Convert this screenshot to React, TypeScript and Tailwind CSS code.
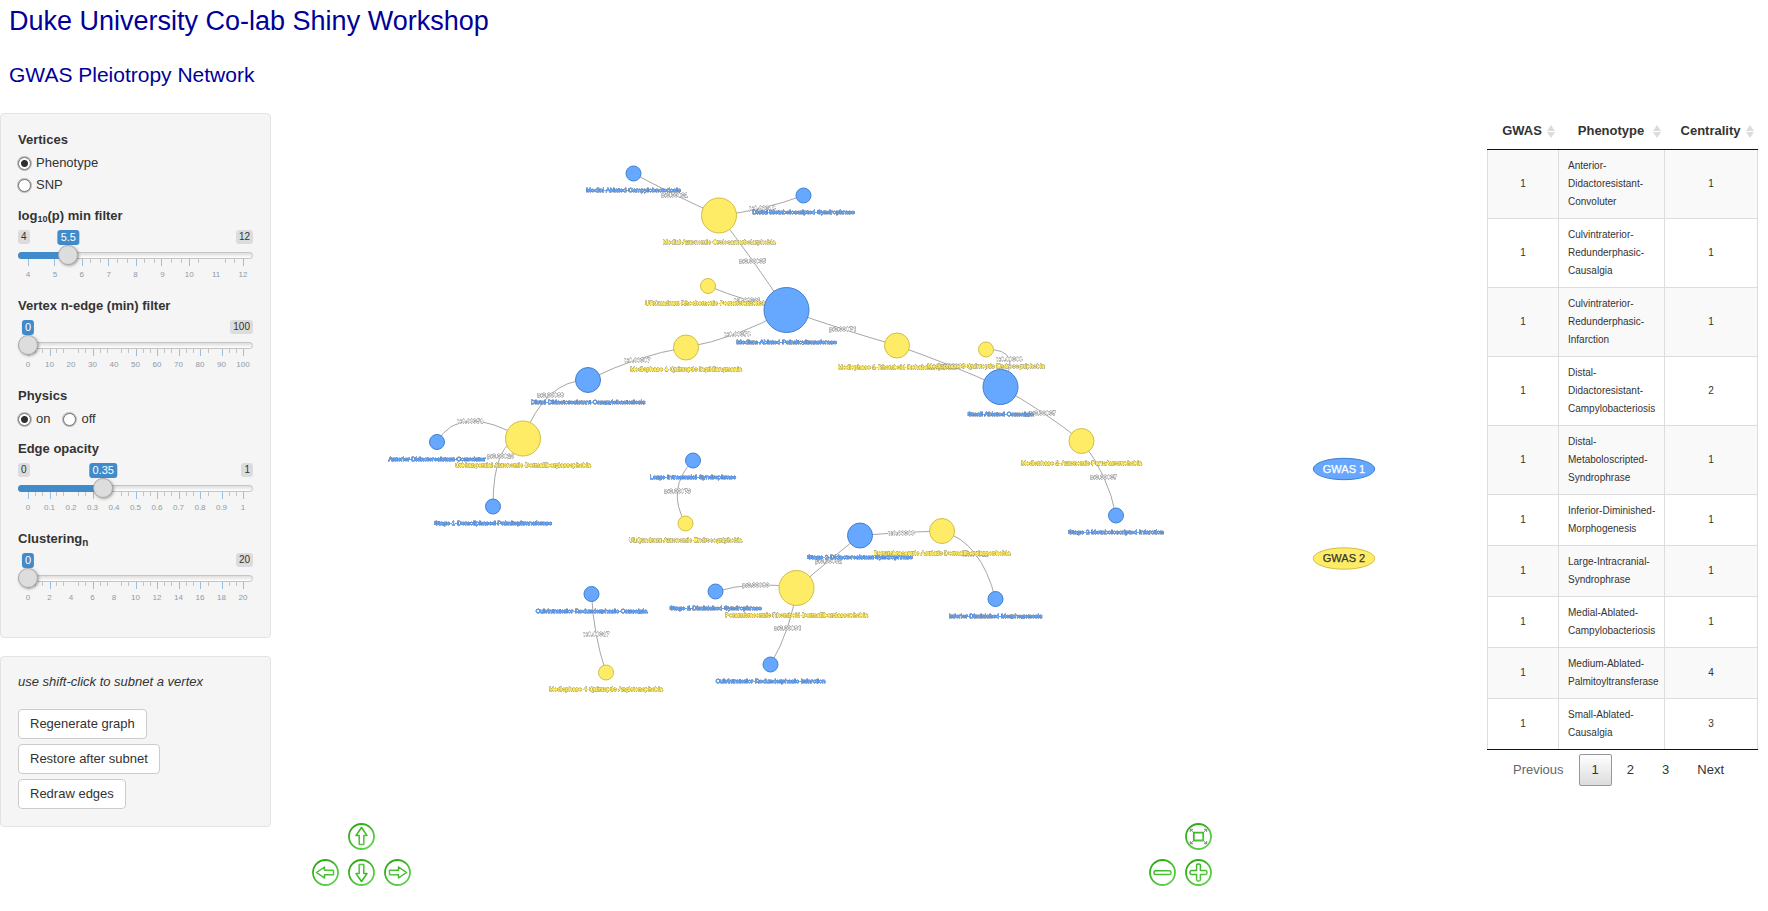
import { useState } from "react";
import type { ReactNode } from "react";

type SliderProps = {
  id: string;
  label: ReactNode;
  min: number;
  max: number;
  step: number;
  initial: number;
  labels: string[];
  majors: number[];
  minors: number[];
};

/* Tick positions, in percent of the usable track. */
const EIGHT_MAJORS = [0, 12, 25, 37, 50, 62, 75, 100];
const EIGHT_MINORS = [29, 33.3, 41.5, 46, 54, 58.5, 66.5, 71, 79.3, 91.5, 95.8];
const TEN_MAJORS = [0, 10, 30, 50, 60, 70, 80, 90, 100];
const TEN_MINORS = [
  3.3, 6.6, 13, 16.5, 23.3, 26.6, 33.3, 36.6, 43.3, 46.6, 53.3, 56.6, 63.3, 66.6, 73.3, 76.6, 83.5, 93.3, 96.6,
];

function Slider({ id, label, min, max, step, initial, labels, majors, minors }: SliderProps) {
  const [value, setValue] = useState(initial);
  const ratio = (value - min) / (max - min);
  const center = `calc(10px + (100% - 20px) * ${ratio})`;
  return (
    <div className="h-[90px]">
      <label htmlFor={id} className="block h-5 font-bold leading-5">
        {label}
      </label>
      <div className="relative mt-1 flex h-4 items-start justify-between text-[10px] leading-[14px]">
        <span className={`rounded-[3px] bg-[#dcdcdc] px-[3px] ${value === min ? "invisible" : ""}`}>{min}</span>
        <span className="rounded-[3px] bg-[#dcdcdc] px-[3px]">{max}</span>
        <output
          htmlFor={id}
          className="absolute top-0 -translate-x-1/2 rounded-[3px] bg-[#428bca] px-[3px] text-[11px] leading-[15px] text-white"
          style={{ left: center }}
        >
          {value}
        </output>
      </div>
      <div className="relative -mt-px flex h-5 items-center">
        <div className="h-[7px] w-full rounded-[4px] border border-[#c4c4c4] bg-gradient-to-b from-[#dedede] to-white" />
        <div className="absolute left-0 h-[7px] rounded-l-[4px] bg-[#428bca]" style={{ width: ratio > 0 ? center : 0 }} />
        <input
          id={id}
          type="range"
          min={min}
          max={max}
          step={step}
          value={value}
          onChange={(e) => setValue(Number(e.target.value))}
          className="absolute inset-0 z-10 h-5 w-full cursor-pointer appearance-none bg-transparent [&::-webkit-slider-thumb]:h-5 [&::-webkit-slider-thumb]:w-5 [&::-webkit-slider-thumb]:appearance-none [&::-webkit-slider-thumb]:rounded-full [&::-webkit-slider-thumb]:border [&::-webkit-slider-thumb]:border-[#aaa] [&::-webkit-slider-thumb]:bg-[#dddddd] [&::-webkit-slider-thumb]:shadow-[1px_1px_3px_rgba(0,0,0,0.35)]"
        />
      </div>
      <div className="-mt-[6px] px-[10px]">
        <svg className="block h-[7px] w-full overflow-visible" shapeRendering="crispEdges" aria-hidden="true">
          {majors.map((p) => (
            <rect key={p} x={`${p}%`} y="0" width="1" height="7" fill="#99bfe0" />
          ))}
          {minors.map((p) => (
            <rect key={p} x={`${p}%`} y="0" width="1" height="4" fill="#c4c4c4" />
          ))}
        </svg>
        <div className="mt-[3px] flex justify-between text-[8px] leading-[11px] text-[#8f9ba6]">
          {labels.map((t) => (
            <span key={t} className="flex w-0 justify-center">
              {t}
            </span>
          ))}
        </div>
      </div>
    </div>
  );
}

function Radio({ name, text, checked }: { name: string; text: string; checked?: boolean }) {
  return (
    <label className="flex h-[22px] items-center gap-[5px]">
      <input
        type="radio"
        name={name}
        defaultChecked={checked}
        className="mt-px h-[13px] w-[13px] appearance-none rounded-full border border-[#777] bg-white shadow-[0_0_0_1px_#bbb] checked:bg-[radial-gradient(circle,#2f2f2f_0_3px,#fff_4px)]"
      />
      {text}
    </label>
  );
}

type Group = 1 | 2;
type VertexData = { x: number; y: number; r: number; g: Group; name: string };

const VERTICES: Record<string, VertexData> = {
  A: { x: 633.5, y: 173.5, r: 7.5, g: 1, name: "Medial-Ablated-Campylobacteriosis" },
  B: { x: 803.5, y: 195.5, r: 7.5, g: 1, name: "Distal-Metaboloscripted-Syndrophrase" },
  C: { x: 719, y: 215.5, r: 17.5, g: 2, name: "Medial-Autonomic-Orolocanterbolarphobia" },
  D: { x: 708, y: 286, r: 7.5, g: 2, name: "URQuadrant-Rhochemonic-Posteriolexophobia" },
  E: { x: 786.5, y: 310, r: 22.5, g: 1, name: "Medium-Ablated-Palmitoyltransferase" },
  F: { x: 686, y: 347.5, r: 12.5, g: 2, name: "Mediophase-1-Quintoptic-Ingridiangmania" },
  G: { x: 588, y: 380, r: 12.5, g: 1, name: "Distal-Didactoresistant-Campylobacteriosis" },
  H: { x: 523, y: 438.5, r: 17.5, g: 2, name: "Orbitangential-Autonomic-Dermalliberglassophobia" },
  I: { x: 437, y: 442, r: 7.5, g: 1, name: "Anterior-Didactoresistant-Convoluter" },
  J: { x: 493, y: 506.5, r: 7.5, g: 1, name: "Stage-1-Demoliphased-Palmitoyltransferase" },
  K: { x: 693, y: 460.5, r: 7.5, g: 1, name: "Large-Intracranial-Syndrophrase" },
  L: { x: 685.5, y: 523.5, r: 7.5, g: 2, name: "ULQuadrant-Autonomic-Endrocogniphobia" },
  M: { x: 591.5, y: 594, r: 7.5, g: 1, name: "Culvintraterior-Redunderphasic-Causalgia" },
  N: { x: 606, y: 672.5, r: 7.5, g: 2, name: "Mediophase-4-Quintoptic-Angistonophobia" },
  O: { x: 715.5, y: 591.5, r: 7.5, g: 1, name: "Stage-1-Diminished-Syndrophrase" },
  P: { x: 796.5, y: 588, r: 17.5, g: 2, name: "Penumbracentric-Rhomboid-Dermalliberglassophobia" },
  Q: { x: 860, y: 535.5, r: 12.5, g: 1, name: "Stage-3-Didactoresistant-Syndrophrase" },
  R: { x: 942, y: 531, r: 12.5, g: 2, name: "Penumbracentric-Astriatic-Dermalliberglassophobia" },
  S: { x: 995.5, y: 599, r: 7.5, g: 1, name: "Inferior-Diminished-Morphogenesis" },
  T: { x: 770.5, y: 664.5, r: 7.5, g: 1, name: "Culvintraterior-Redunderphasic-Infarction" },
  U: { x: 897, y: 345.5, r: 12.5, g: 2, name: "Mediophase-1-Rhomboid-Rehabauriophobia" },
  V: { x: 986, y: 349.5, r: 7.5, g: 2, name: "Mediophase-6-Quintoptic-Endrocogniphobia" },
  W: { x: 1000.5, y: 387, r: 17.5, g: 1, name: "Small-Ablated-Causalgia" },
  X: { x: 1081.5, y: 441, r: 12.5, g: 2, name: "Mediophase-2-Autonomic-PartoAuroraphobia" },
  Y: { x: 1116, y: 515.5, r: 7.5, g: 1, name: "Stage-2-Metaboloscripted-Infarction" },
};

/* from, to, the point the curve runs through (where its label sits), p value */
const EDGES: [string, string, number, number, string][] = [
  ["A", "C", 674.5, 194.5, "p:0.00001"],
  ["C", "B", 762, 208, "p:0.00018"],
  ["C", "E", 752.5, 260.5, "p:0.00005"],
  ["D", "E", 747, 300, "p:0.00021"],
  ["F", "E", 737, 333.5, "p:0.00078"],
  ["G", "F", 637, 359.5, "p:0.00007"],
  ["H", "G", 550.5, 394.5, "p:0.00068"],
  ["I", "H", 470, 421, "p:0.00053"],
  ["J", "H", 500.5, 456, "p:0.00010"],
  ["K", "L", 677.5, 490.5, "p:0.00073"],
  ["M", "N", 596, 633.5, "p:0.00037"],
  ["O", "P", 755.5, 585, "p:0.00080"],
  ["P", "T", 787.5, 627.5, "p:0.00064"],
  ["P", "Q", 828.5, 561, "p:0.00052"],
  ["Q", "R", 901, 532.5, "p:0.00006"],
  ["R", "S", 975, 553.5, "p:0.00012"],
  ["E", "U", 842.5, 329, "p:0.00074"],
  ["U", "W", 951.5, 366, "p:0.00066"],
  ["V", "W", 1009, 358.5, "p:0.00008"],
  ["W", "X", 1042.5, 412.5, "p:0.00007"],
  ["X", "Y", 1103.5, 476.5, "p:0.00007"],
];

const FILL = { 1: "#66a8ff", 2: "#ffec66" };
const STROKE = { 1: "#3f7fd0", 2: "#cfbf45" };

function Network() {
  return (
    <svg
      viewBox="271 113 956 798"
      className="block w-full"
      role="img"
      aria-label="Pleiotropy network"
      fontFamily="'Liberation Sans', Arial, sans-serif"
      fontSize="6"
      textAnchor="middle"
    >
      {EDGES.map(([a, b, lx, ly]) => {
        const p = VERTICES[a];
        const q = VERTICES[b];
        const cx = 2 * lx - (p.x + q.x) / 2;
        const cy = 2 * ly - (p.y + q.y) / 2;
        return (
          <path key={a + b} d={`M${p.x} ${p.y}Q${cx} ${cy} ${q.x} ${q.y}`} fill="none" stroke="#a6a6a6" strokeWidth="1" />
        );
      })}
      {EDGES.map(([a, b, lx, ly, text]) => (
        <text
          key={a + b}
          x={lx}
          y={ly + 2}
          fill="#ffffff"
          stroke="#ffffff"
          strokeWidth="0.3"
          className="[filter:drop-shadow(0_0_0.5px_#444)_drop-shadow(0_0_0.3px_#666)]"
        >
          {text}
        </text>
      ))}
      {Object.entries(VERTICES).map(([key, v]) => (
        <g key={key}>
          <circle cx={v.x} cy={v.y} r={v.r} fill={FILL[v.g]} stroke={STROKE[v.g]} strokeWidth="1" />
          <text
            x={v.x}
            y={v.y + v.r + 11}
            fill={FILL[v.g]}
            stroke={FILL[v.g]}
            strokeWidth="0.5"
            className="[filter:drop-shadow(0_0_0.5px_#444)_drop-shadow(0_0_0.3px_#888)]"
          >
            {v.name}
          </text>
        </g>
      ))}
    </svg>
  );
}

const ARROW = "M13.5 4.5 L19 12.5 H15.8 V21.5 H11.2 V12.5 H8 Z";

function NavButton({ label, place, children }: { label: string; place: string; children: ReactNode }) {
  return (
    <button type="button" aria-label={label} className={`h-[27px] w-[27px] ${place}`}>
      <svg viewBox="0 0 27 27" className="block h-full w-full" fill="none" stroke="url(#nav-green)" strokeLinejoin="round">
        <circle cx="13.5" cy="13.5" r="12.5" fill="#ffffff" strokeWidth="1.8" />
        {children}
      </svg>
    </button>
  );
}

function NavDefs() {
  return (
    <svg className="absolute h-0 w-0" aria-hidden="true">
      <defs>
        <linearGradient id="nav-green" gradientUnits="userSpaceOnUse" x1="4" y1="2" x2="22" y2="26">
          <stop offset="0" stopColor="#27a80c" />
          <stop offset="1" stopColor="#66d455" />
        </linearGradient>
      </defs>
    </svg>
  );
}

const ROWS: [string[], number][] = [
  [["Anterior-", "Didactoresistant-", "Convoluter"], 1],
  [["Culvintraterior-", "Redunderphasic-", "Causalgia"], 1],
  [["Culvintraterior-", "Redunderphasic-", "Infarction"], 1],
  [["Distal-", "Didactoresistant-", "Campylobacteriosis"], 2],
  [["Distal-", "Metaboloscripted-", "Syndrophrase"], 1],
  [["Inferior-Diminished-", "Morphogenesis"], 1],
  [["Large-Intracranial-", "Syndrophrase"], 1],
  [["Medial-Ablated-", "Campylobacteriosis"], 1],
  [["Medium-Ablated-", "Palmitoyltransferase"], 4],
  [["Small-Ablated-", "Causalgia"], 3],
];

function HeadCell({ text, width }: { text: string; width: string }) {
  return (
    <th scope="col" className={`relative h-[37px] border-b border-[#111] p-0 pr-[2px] ${width}`}>
      <button type="button" className="font-bold">
        {text}
      </button>
      <svg viewBox="0 0 8 13" className="absolute right-1 top-[12px] h-[13px] w-2" fill="#dcdcdc" aria-hidden="true">
        <path d="M4 0L8 6H0ZM4 13L8 7H0Z" />
      </svg>
    </th>
  );
}

function PageButton({ text, tone }: { text: string; tone: string }) {
  return (
    <button type="button" className={`h-8 rounded-[2px] border px-3 ${tone}`}>
      {text}
    </button>
  );
}

function ActionButton({ text }: { text: string }) {
  return (
    <button type="button" className="h-[30px] rounded-[4px] border border-[#ccc] bg-white px-[11px]">
      {text}
    </button>
  );
}

export default function App() {
  return (
    <div className="min-h-screen bg-white font-['Liberation_Sans',Arial,sans-serif] text-[13px] leading-[18px] text-[#333]">
      <header className="px-[9px] pt-[6px] text-[#000099]">
        <h1 className="text-[27px] leading-[30px]">Duke University Co-lab Shiny Workshop</h1>
        <h2 className="mt-[27px] text-[21px] leading-6">GWAS Pleiotropy Network</h2>
      </header>

      <div className="mt-[26px] flex items-start">
        <aside className="flex w-[271px] shrink-0 flex-col gap-[18px]">
          <form className="rounded-[4px] border border-[#e3e3e3] bg-[#f5f5f5] px-[17px] pb-[18px] pt-4">
            <fieldset>
              <legend className="h-5 font-bold leading-5">Vertices</legend>
              <div className="mb-[10px] mt-[2px]">
                <Radio name="vertices" text="Phenotype" checked />
                <Radio name="vertices" text="SNP" />
              </div>
            </fieldset>
            <Slider
              id="pmin"
              label={
                <>
                  log<sub className="text-[9px]">10</sub>(p) min filter
                </>
              }
              min={4}
              max={12}
              step={0.5}
              initial={5.5}
              labels={["4", "5", "6", "7", "8", "9", "10", "11", "12"]}
              majors={EIGHT_MAJORS}
              minors={EIGHT_MINORS}
            />
            <Slider
              id="nedge"
              label="Vertex n-edge (min) filter"
              min={0}
              max={100}
              step={1}
              initial={0}
              labels={["0", "10", "20", "30", "40", "50", "60", "70", "80", "90", "100"]}
              majors={TEN_MAJORS}
              minors={TEN_MINORS}
            />
            <fieldset>
              <legend className="h-5 font-bold leading-5">Physics</legend>
              <div className="mb-[9px] mt-[2px] flex gap-[13px]">
                <Radio name="physics" text="on" checked />
                <Radio name="physics" text="off" />
              </div>
            </fieldset>
            <Slider
              id="opacity"
              label="Edge opacity"
              min={0}
              max={1}
              step={0.05}
              initial={0.35}
              labels={["0", "0.1", "0.2", "0.3", "0.4", "0.5", "0.6", "0.7", "0.8", "0.9", "1"]}
              majors={TEN_MAJORS}
              minors={TEN_MINORS}
            />
            <Slider
              id="cluster"
              label={
                <>
                  Clustering<sub className="text-[10px]">n</sub>
                </>
              }
              min={0}
              max={20}
              step={1}
              initial={0}
              labels={["0", "2", "4", "6", "8", "10", "12", "14", "16", "18", "20"]}
              majors={TEN_MAJORS}
              minors={TEN_MINORS}
            />
          </form>

          <div className="rounded-[4px] border border-[#e3e3e3] bg-[#f5f5f5] px-[17px] pb-[17px] pt-4">
            <p className="italic">use shift-click to subnet a vertex</p>
            <div className="mt-[18px] flex flex-col items-start gap-[5px]">
              <ActionButton text="Regenerate graph" />
              <ActionButton text="Restore after subnet" />
              <ActionButton text="Redraw edges" />
            </div>
          </div>
        </aside>

        <main className="relative min-w-0 flex-1">
          <NavDefs />
          <Network />
          <div className="absolute bottom-[25px] left-[41px] grid grid-cols-3 gap-[9px]">
            <NavButton label="Up" place="col-start-2">
              <path d={ARROW} strokeWidth="1.5" />
            </NavButton>
            <NavButton label="Left" place="col-start-1">
              <path d={ARROW} strokeWidth="1.5" transform="rotate(-90 13.5 13.5)" />
            </NavButton>
            <NavButton label="Down" place="col-start-2">
              <path d={ARROW} strokeWidth="1.5" transform="rotate(180 13.5 13.5)" />
            </NavButton>
            <NavButton label="Right" place="col-start-3">
              <path d={ARROW} strokeWidth="1.5" transform="rotate(90 13.5 13.5)" />
            </NavButton>
          </div>
          <div className="absolute bottom-[25px] right-[15px] grid grid-cols-2 gap-[9px]">
            <NavButton label="Fit" place="col-start-2">
              <rect x="8.8" y="9.7" width="9.4" height="7.8" strokeWidth="1.8" />
              <path
                d="M8.3 9L5.5 6.5M5.3 9V6.3H8M18.7 9L21.5 6.5M19 6.3h2.7V9M8.3 18L5.5 20.5M5.3 18v2.7H8M18.7 18l2.8 2.5M19 20.7h2.7V18"
                stroke="#777777"
                strokeWidth="0.9"
              />
            </NavButton>
            <NavButton label="Zoom out" place="col-start-1">
              <rect x="5" y="11.7" width="17" height="3.8" rx="1.6" strokeWidth="1.5" />
            </NavButton>
            <NavButton label="Zoom in" place="col-start-2">
              <path
                d="M11.6 6.6a1.6 1.6 0 0 1 1.6-1.6h.6a1.6 1.6 0 0 1 1.6 1.6v5h5a1.6 1.6 0 0 1 1.6 1.6v.6a1.6 1.6 0 0 1-1.6 1.6h-5v5a1.6 1.6 0 0 1-1.6 1.6h-.6a1.6 1.6 0 0 1-1.6-1.6v-5h-5a1.6 1.6 0 0 1-1.6-1.6v-.6a1.6 1.6 0 0 1 1.6-1.6h5Z"
                strokeWidth="1.5"
              />
            </NavButton>
          </div>
        </main>

        <section aria-label="Legend" className="flex w-[260px] shrink-0 flex-col items-center pt-[344px] pr-[26px]">
          <svg
            viewBox="0 0 64 114"
            className="h-[114px] w-16"
            fontFamily="'Liberation Sans', Arial, sans-serif"
            fontSize="11"
            textAnchor="middle"
          >
            <ellipse cx="32" cy="12" rx="30.7" ry="10.7" fill={FILL[1]} stroke={STROKE[1]} />
            <text x="32" y="15.5" fill="#ffffff" stroke="#ffffff" strokeWidth="0.25">
              GWAS 1
            </text>
            <ellipse cx="32" cy="101.5" rx="30.7" ry="10.7" fill={FILL[2]} stroke={STROKE[2]} />
            <text x="32" y="105" fill="#343434" stroke="#343434" strokeWidth="0.25">
              GWAS 2
            </text>
          </svg>
        </section>

        <section aria-label="Centrality" className="mr-[10px] w-[271px] shrink-0">
          <div className="border-b border-[#111]">
            <table className="w-full table-fixed border-separate border-spacing-0">
              <thead>
                <tr>
                  <HeadCell text="GWAS" width="w-[72px]" />
                  <HeadCell text="Phenotype" width="w-[106px]" />
                  <HeadCell text="Centrality" width="w-[93px]" />
                </tr>
              </thead>
              <tbody className="text-[10px]">
                {ROWS.map(([lines, n]) => (
                  <tr
                    key={lines.join("")}
                    className="odd:bg-[#f9f9f9] [&>td]:border-b [&>td]:border-r [&>td]:border-[#ddd] last:[&>td]:border-b-0"
                  >
                    <td className="border-l p-0 text-center">1</td>
                    <td className="py-[7px] pl-[9px] pr-0">
                      {lines.map((l) => (
                        <span key={l} className="block">
                          {l}
                        </span>
                      ))}
                    </td>
                    <td className="p-0 text-center">{n}</td>
                  </tr>
                ))}
              </tbody>
            </table>
          </div>
          <nav aria-label="Pages" className="mt-1 flex justify-center gap-[2px] pr-2">
            <PageButton text="Previous" tone="border-transparent text-[#666]" />
            <PageButton text="1" tone="border-[#979797] bg-gradient-to-b from-white to-[#dcdcdc]" />
            <PageButton text="2" tone="border-transparent" />
            <PageButton text="3" tone="border-transparent" />
            <PageButton text="Next" tone="border-transparent" />
          </nav>
        </section>
      </div>
    </div>
  );
}
